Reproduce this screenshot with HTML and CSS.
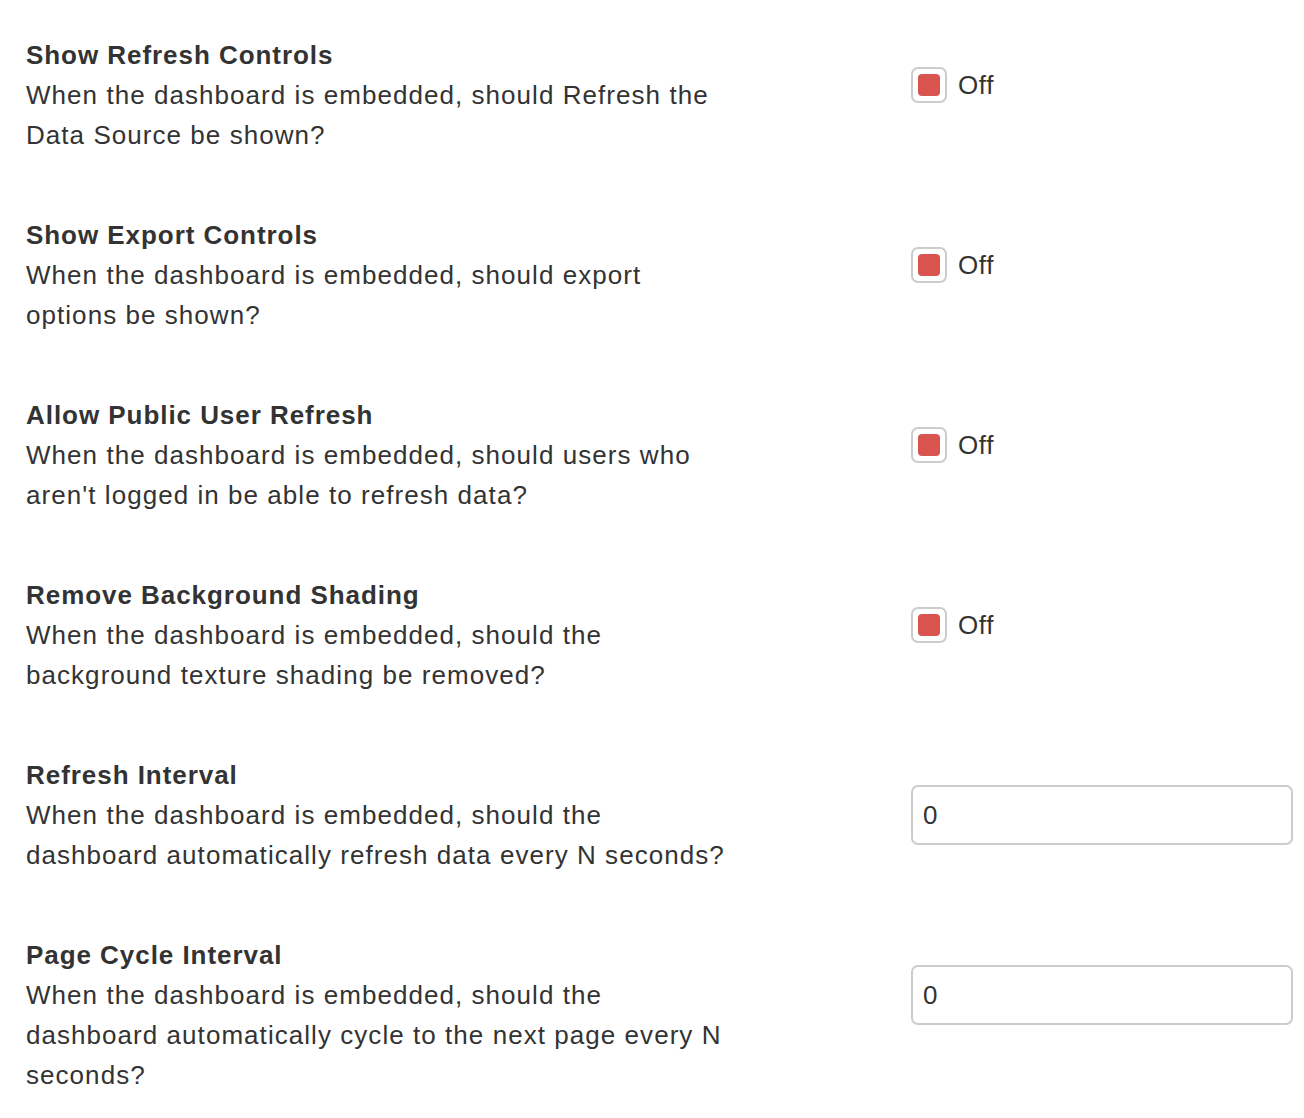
FILE: index.html
```html
<!DOCTYPE html>
<html lang="en">
<head>
    <meta charset="UTF-8">
    <title>Embed Settings</title>
    <meta name="viewport" content="width=device-width, initial-scale=1.0">
    <link rel="stylesheet" href="styles.css">
</head>
<body>

    <div class="settings">

        <div class="setting-row">
            <div class="setting-text">
                <h3>Show Refresh Controls</h3>
                <p>When the dashboard is embedded, should Refresh the Data Source be shown?</p>
            </div>
            <div class="setting-control">
                <label class="toggle"><span class="toggle-box"><span class="toggle-dot"></span></span> Off</label>
            </div>
        </div>

        <div class="setting-row">
            <div class="setting-text">
                <h3>Show Export Controls</h3>
                <p>When the dashboard is embedded, should export options be shown?</p>
            </div>
            <div class="setting-control">
                <label class="toggle"><span class="toggle-box"><span class="toggle-dot"></span></span> Off</label>
            </div>
        </div>

        <div class="setting-row">
            <div class="setting-text">
                <h3>Allow Public User Refresh</h3>
                <p>When the dashboard is embedded, should users who aren't logged in be able to refresh data?</p>
            </div>
            <div class="setting-control">
                <label class="toggle"><span class="toggle-box"><span class="toggle-dot"></span></span> Off</label>
            </div>
        </div>

        <div class="setting-row">
            <div class="setting-text">
                <h3>Remove Background Shading</h3>
                <p>When the dashboard is embedded, should the background texture shading be removed?</p>
            </div>
            <div class="setting-control">
                <label class="toggle"><span class="toggle-box"><span class="toggle-dot"></span></span> Off</label>
            </div>
        </div>

        <div class="setting-row">
            <div class="setting-text">
                <h3>Refresh Interval</h3>
                <p>When the dashboard is embedded, should the dashboard automatically refresh data every N seconds?</p>
            </div>
            <div class="setting-control">
                <input class="text-input" type="text" value="0">
            </div>
        </div>

        <div class="setting-row">
            <div class="setting-text">
                <h3>Page Cycle Interval</h3>
                <p>When the dashboard is embedded, should the dashboard automatically cycle to the next page every N seconds?</p>
            </div>
            <div class="setting-control">
                <input class="text-input" type="text" value="0">
            </div>
        </div>

    </div>

</body>
</html>
```

FILE: styles.css
```css
body {
    font-family: "Liberation Sans", Arial, Helvetica, sans-serif;
    background: #fff;
    color: #333;
    margin: 0;
    padding: 0;
}

.settings {
    padding: 35px 11px 0 26px;
}

.setting-row {
    display: flex;
    margin-bottom: 60px;
}

.setting-text {
    width: 710px;
}

.setting-text h3 {
    font-size: 26px;
    line-height: 40px;
    font-weight: bold;
    letter-spacing: 0.95px;
    margin: 0;
}

.setting-text p {
    font-size: 26px;
    line-height: 40px;
    letter-spacing: 1.05px;
    margin: 0;
}

.setting-control {
    margin-left: auto;
    width: 382px;
    padding-top: 30px;
}

.toggle {
    display: flex;
    align-items: center;
    gap: 11px;
    height: 40px;
    font-size: 26px;
    letter-spacing: 0.6px;
    cursor: pointer;
}

.toggle-box {
    width: 36px;
    height: 36px;
    box-sizing: border-box;
    border: 2px solid #ccc;
    border-radius: 7px;
    display: flex;
    align-items: center;
    justify-content: center;
    background: #fff;
}

.toggle-dot {
    width: 22px;
    height: 22px;
    border-radius: 4px;
    background: #d9534f;
}

.text-input {
    display: block;
    width: 100%;
    height: 60px;
    box-sizing: border-box;
    border: 2px solid #ccc;
    border-radius: 7px;
    padding: 0 10px;
    font-family: inherit;
    font-size: 26px;
    color: #333;
    outline: none;
}
```
